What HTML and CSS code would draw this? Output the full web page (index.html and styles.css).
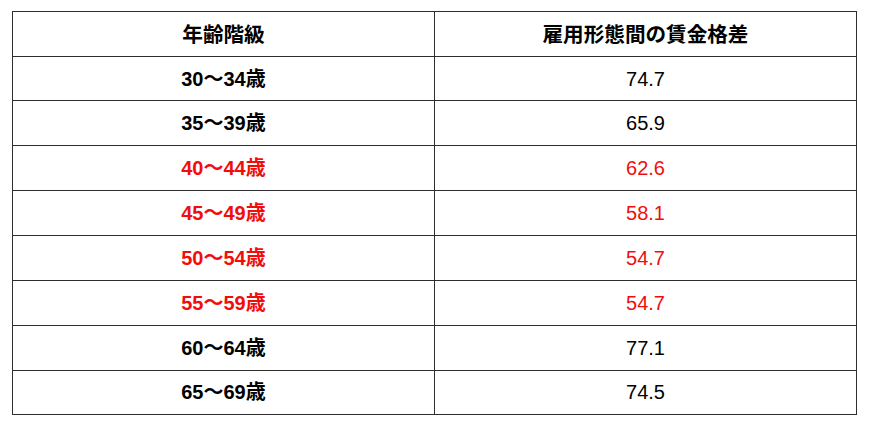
FILE: index.html
```html
<!DOCTYPE html>
<html lang="ja">
<head>
<meta charset="utf-8">
<title>賃金格差</title>
<link rel="stylesheet" href="styles.css">
</head>
<body>
<table class="wage-table">
  <thead>
    <tr><th class="col-age">年齢階級</th><th class="col-gap">雇用形態間の賃金格差</th></tr>
  </thead>
  <tbody>
    <tr><td class="age">30～34歳</td><td class="val">74.7</td></tr>
    <tr><td class="age">35～39歳</td><td class="val">65.9</td></tr>
    <tr class="hl"><td class="age">40～44歳</td><td class="val">62.6</td></tr>
    <tr class="hl"><td class="age">45～49歳</td><td class="val">58.1</td></tr>
    <tr class="hl"><td class="age">50～54歳</td><td class="val">54.7</td></tr>
    <tr class="hl"><td class="age">55～59歳</td><td class="val">54.7</td></tr>
    <tr><td class="age">60～64歳</td><td class="val">77.1</td></tr>
    <tr><td class="age">65～69歳</td><td class="val">74.5</td></tr>
  </tbody>
</table>
</body>
</html>
```
FILE: styles.css
```css
html, body {
  margin: 0;
  padding: 0;
  background: #ffffff;
}
body {
  padding: 11px 0 0 12px;
  font-family: "Liberation Sans", "Noto Sans CJK JP", sans-serif;
  color: #000;
}
.wage-table {
  border-collapse: collapse;
  width: 845px;
  table-layout: fixed;
}
.wage-table th,
.wage-table td {
  border: 1px solid #2e2e2e;
  height: 43.85px;
  padding: 0;
  text-align: center;
  vertical-align: middle;
  font-size: 20px;
  line-height: 24px;
}
.col-age { width: 421px; }
.wage-table th {
  font-weight: bold;
  font-size: 20.6px;
  height: 41.6px;
  padding-top: 2px;
}
.age { font-weight: bold; }
.val { font-weight: normal; }
.hl td { color: #f20d0d; }
```
